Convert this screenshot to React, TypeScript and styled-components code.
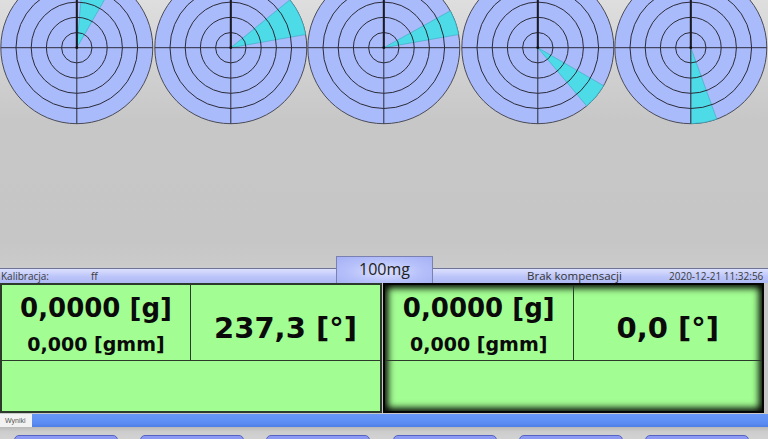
import styled, { createGlobalStyle } from "styled-components";

const GlobalStyle = createGlobalStyle`
  html, body {
    margin: 0;
    padding: 0;
    background: #c8c8c8;
  }
  * {
    box-sizing: border-box;
  }
`;

const Page = styled.div`
  width: 768px;
  height: 439px;
  overflow: hidden;
  display: flex;
  flex-direction: column;
  font-family: "Open Sans", "Liberation Sans", sans-serif;
`;

const DialArea = styled.div`
  height: 268px;
  background: linear-gradient(180deg, #dedede 0%, #c7c7c7 45%, #c6c6c6 90%, #cbcbcb 100%);
  display: flex;
  align-items: flex-start;
`;

const DialSvg = styled.svg`
  display: block;
  width: 153.6px;
  height: 124px;
  overflow: visible;
`;

const StatusBar = styled.div`
  height: 15px;
  display: flex;
  align-items: flex-end;
  border-top: 1px solid #6f7498;
  background: linear-gradient(180deg, #dce0fd 0%, #bcc5f9 55%, #aeb9f5 100%);
  color: #333;
  font-size: 10px;
  line-height: 14px;
  white-space: nowrap;
`;

const StatusText = styled.span<{ $width?: number; $size?: number; $pad?: number }>`
  display: block;
  width: ${(p) => (p.$width ? `${p.$width}px` : "auto")};
  padding-left: ${(p) => p.$pad ?? 0}px;
  font-size: ${(p) => p.$size ?? 10}px;
  color: ${(p) => (p.$size ? "#333" : "#3a3a3a")};
`;

const WeightTab = styled.div`
  width: 97px;
  height: 27px;
  align-self: flex-end;
  flex-shrink: 0;
  border: 1px solid #7a80b0;
  border-bottom: none;
  background: radial-gradient(ellipse at 50% 55%, #dde2ff 0%, #b6c0fa 55%, #a5b1f5 100%);
  color: #222;
  font-size: 16px;
  line-height: 25px;
  text-align: center;
`;

const PanelRow = styled.div`
  height: 131px;
  display: flex;
  gap: 1px;
  padding-bottom: 1px;
`;

const Panel = styled.div<{ $active?: boolean; $width: number }>`
  width: ${(p) => p.$width}px;
  height: 130px;
  display: grid;
  grid-template-rows: 76px 1fr;
  grid-template-columns: 1fr 1fr;
  background: #a2fd92;
  border: 2px solid ${(p) => (p.$active ? "#050505" : "#2c3a2c")};
  box-shadow: ${(p) => (p.$active ? "inset 0 0 7px 3px #000" : "none")};
`;

const Cell = styled.div<{ $wide?: boolean; $divider?: boolean }>`
  grid-column: ${(p) => (p.$wide ? "1 / span 2" : "auto")};
  border-right: ${(p) => (p.$divider ? "1.5px solid #2c3a2c" : "none")};
  border-bottom: ${(p) => (p.$wide ? "none" : "1.5px solid #2c3a2c")};
  display: flex;
  flex-direction: column;
  align-items: center;
  justify-content: center;
  padding-top: 3px;
  color: #0a0a0a;
  font-family: "DejaVu Sans", "Verdana", sans-serif;
  font-weight: bold;
  white-space: nowrap;
`;

const MainValue = styled.div`
  font-size: 26px;
  line-height: 30px;
`;

const SubValue = styled.div`
  font-size: 19px;
  line-height: 22px;
  margin-top: 10px;
`;

const AngleValue = styled.div`
  font-size: 29px;
  line-height: 34px;
  padding-top: 7px;
`;

const TabBar = styled.div`
  height: 13px;
  display: flex;
  background: linear-gradient(180deg, #6798f8 0%, #5b8cf3 70%, #4f7ee4 100%);
`;

const ResultTab = styled.div`
  width: 32px;
  height: 13px;
  background: #f2f2f2;
  color: #555;
  font-family: "Liberation Sans", sans-serif;
  font-size: 7px;
  line-height: 13px;
  padding-left: 5px;
`;

const ButtonStrip = styled.div`
  height: 12px;
  display: flex;
  gap: 22.2px;
  padding: 8px 0 0 14px;
  background: linear-gradient(180deg, #b9b9b9 0%, #cdcdcd 40%, #d2d2d2 100%);
`;

const NavButton = styled.div`
  width: 104px;
  height: 14px;
  flex-shrink: 0;
  border: 1px solid #5562c4;
  border-radius: 5px 5px 0 0;
  background: linear-gradient(180deg, #8f9cf5 0%, #7b89ef 100%);
`;

interface IDial {
  from: number;
  to: number;
}

const dials: IDial[] = [
  { from: 5, to: 30 },
  { from: 51, to: 80 },
  { from: 61, to: 80 },
  { from: 120, to: 140 },
  { from: 160, to: 180 },
];

const R = 76;

const point = (deg: number, r: number) => {
  const a = (deg * Math.PI) / 180;
  return `${(r * Math.sin(a)).toFixed(2)} ${(-r * Math.cos(a)).toFixed(2)}`;
};

const Dial = ({ from, to }: IDial) => {
  const wedge = `M 0 0 L ${point(from, R)} A ${R} ${R} 0 0 1 ${point(to, R)} Z`;
  return (
    <DialSvg viewBox="-76.8 -47.7 153.6 124">
      <circle cx={0} cy={0} r={R} fill="#aabbfb" stroke="#4a4a55" strokeWidth={1} />
      <path d={wedge} fill="#45dde6" fillOpacity={0.92} stroke="#3aa7bd" strokeWidth={0.6} />
      {[15.2, 30.4, 45.6, 60.8].map((r) => (
        <circle key={r} cx={0} cy={0} r={r} fill="none" stroke="#2a2a38" strokeWidth={1} />
      ))}
      <line x1={-R} y1={0} x2={R} y2={0} stroke="#2a2a38" strokeWidth={1} />
      <line x1={0} y1={-R} x2={0} y2={R} stroke="#2a2a38" strokeWidth={1} />
      <line x1={0} y1={-R} x2={0} y2={0} stroke="#1a1a24" strokeWidth={2} />
      <circle cx={0} cy={0} r={1.4} fill="#111" />
    </DialSvg>
  );
};

interface IReading {
  weight: string;
  moment: string;
  angle: string;
  active?: boolean;
  width: number;
}

const readings: IReading[] = [
  { weight: "0,0000 [g]", moment: "0,000 [gmm]", angle: "237,3 [°]", width: 382 },
  { weight: "0,0000 [g]", moment: "0,000 [gmm]", angle: "0,0 [°]", active: true, width: 381 },
];

const App = () => {
  return (
    <Page>
      <GlobalStyle />
      <DialArea>
        {dials.map((d, i) => (
          <Dial key={i} from={d.from} to={d.to} />
        ))}
      </DialArea>
      <StatusBar>
        <StatusText $width={91} $pad={1}>Kalibracja:</StatusText>
        <StatusText $width={245}>ff</StatusText>
        <WeightTab>100mg</WeightTab>
        <StatusText $width={236} $size={11.5} $pad={94}>Brak kompensacji</StatusText>
        <StatusText>2020-12-21 11:32:56</StatusText>
      </StatusBar>
      <PanelRow>
        {readings.map((r, i) => (
          <Panel key={i} $active={r.active} $width={r.width}>
            <Cell $divider>
              <MainValue>{r.weight}</MainValue>
              <SubValue>{r.moment}</SubValue>
            </Cell>
            <Cell>
              <AngleValue>{r.angle}</AngleValue>
            </Cell>
            <Cell $wide />
          </Panel>
        ))}
      </PanelRow>
      <TabBar>
        <ResultTab>Wyniki</ResultTab>
      </TabBar>
      <ButtonStrip>
        {[0, 1, 2, 3, 4, 5].map((n) => (
          <NavButton key={n} />
        ))}
      </ButtonStrip>
    </Page>
  );
};

export default App;
